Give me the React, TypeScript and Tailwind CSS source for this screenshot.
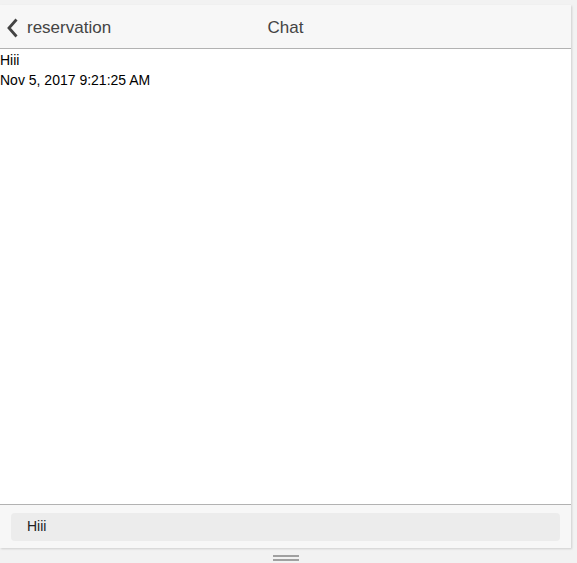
export default function App() {
  return (
    <div className="h-[563px] w-[577px] bg-[#f2f2f2] pt-[5px] font-['Liberation_Sans',Arial,sans-serif] flex flex-col">
      {/* Chat panel */}
      <div className="w-[571px] h-[543px] flex flex-col bg-white shadow-[1px_1px_2px_rgba(0,0,0,0.15)]">
        <div className="relative h-[44px] bg-[#f7f7f7] border-b border-[#b2b2b2] flex items-center pt-[2px] shrink-0">
          <div className="flex items-center pl-[6px] text-[#444] text-[17px]">
            <svg className="w-[13px] h-[22px] mr-[8px]" viewBox="0 0 13 22" fill="none">
              <path d="M10.5 2.5 L3 11 L10.5 19.5" stroke="#444" strokeWidth="2.8" strokeLinecap="butt" strokeLinejoin="miter" />
            </svg>
            <span>reservation</span>
          </div>
          <div className="absolute inset-0 pt-[2px] flex items-center justify-center text-[17px] text-[#444] pointer-events-none">
            Chat
          </div>
        </div>

        <div className="flex-1 text-[14px] text-black leading-[20px] pt-[1px]">
          <div>Hiii</div>
          <div>Nov 5, 2017 9:21:25 AM</div>
        </div>

        <div className="h-[44px] bg-[#f7f7f7] border-t border-[#b2b2b2] flex items-center px-[11px] shrink-0">
          <div className="h-[28px] w-full bg-[#ececec] rounded-[4px] flex items-center pl-[16px] text-[14px] text-[#222]">
            Hiii
          </div>
        </div>
      </div>

      {/* resize handle */}
      <div className="w-[571px] flex-1 flex flex-col items-center pt-[7px] gap-[2px]">
        <div className="w-[26px] h-[2px] bg-[#a0a0a0]" />
        <div className="w-[26px] h-[2px] bg-[#a0a0a0]" />
      </div>
    </div>
  );
}
